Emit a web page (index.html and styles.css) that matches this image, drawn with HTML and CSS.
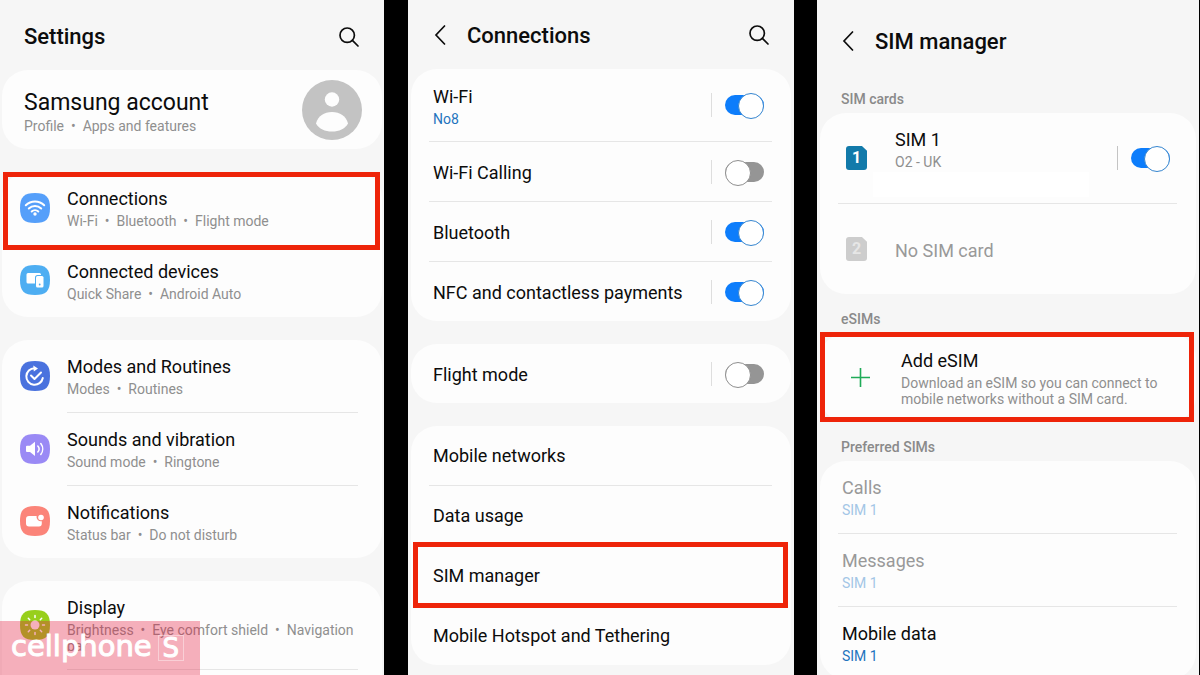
FILE: index.html
```html
<!DOCTYPE html>
<html lang="en">
<head>
<meta charset="utf-8">
<meta name="viewport" content="width=device-width, initial-scale=1">
<title>Add an eSIM: Settings, Connections, SIM manager</title>
<link rel="stylesheet" href="styles.css">
</head>
<body>
<main class="screens">
  <section class="screen screen-settings">
    <header class="bar">
      <h1>Settings</h1>
      <button class="icon-btn" aria-label="Search"><svg width="20" height="20" viewBox="0 0 20 20"><circle cx="8.2" cy="8.2" r="7.2"/><path d="M13.4 13.4 19 19"/></svg></button>
    </header>
    <a class="card account" href="#">
      <span class="text"><span class="name">Samsung account</span><span class="sub">Profile &nbsp;•&nbsp; Apps and features</span></span>
      <svg class="avatar" width="60" height="60" viewBox="0 0 60 60"><circle cx="30" cy="30" r="30" fill="#c3c3c3"/><circle cx="30" cy="19.500" r="7.200" fill="#fdfdfd"/><path d="M14 43.500C16 36 22 32 30 32s14 4 16 11.500C43 49 37 51.500 30 51.500S17 49 14 43.500Z" fill="#fdfdfd"/></svg>
    </a>
    <nav class="card">
      <a class="item marked" href="#">
        <svg class="badge" viewBox="0 0 30 30"><path class="tile blue" d="M15 0C26 0 30 4 30 15S26 30 15 30 0 26 0 15 4 0 15 0Z"/><g class="line"><path d="M5.800 12.300a13 13 0 0 1 18.400 0M8.800 15.500a8.800 8.800 0 0 1 12.400 0M11.700 18.500a4.700 4.700 0 0 1 6.600 0"/></g><circle cx="15" cy="21" r="1.700" fill="#fff"/></svg>
        <span class="text"><span class="title">Connections</span><span class="sub">Wi-Fi &nbsp;•&nbsp; Bluetooth &nbsp;•&nbsp; Flight mode</span></span>
      </a>
      <a class="item" href="#">
        <svg class="badge" viewBox="0 0 30 30"><path class="tile sky" d="M15 0C26 0 30 4 30 15S26 30 15 30 0 26 0 15 4 0 15 0Z"/><path fill="#fff" d="M8 8h11.500a1.500 1.500 0 0 1 1.500 1.500V10h-3.500a2.500 2.500 0 0 0-2.500 2.500V18.500H8A1.500 1.500 0 0 1 6.500 17V9.500A1.500 1.500 0 0 1 8 8Z"/><rect x="16" y="11" width="7.500" height="11.500" rx="1.500" fill="#fff"/><circle cx="19.700" cy="19.500" r=".9" fill="#4eaef2"/></svg>
        <span class="text"><span class="title">Connected devices</span><span class="sub">Quick Share &nbsp;•&nbsp; Android Auto</span></span>
      </a>
    </nav>
    <nav class="card">
      <a class="item" href="#">
        <svg class="badge" viewBox="0 0 30 30"><path class="tile navy" d="M15 0C26 0 30 4 30 15S26 30 15 30 0 26 0 15 4 0 15 0Z"/><g class="line"><path d="M14.500 7.200A8.300 8.300 0 1 0 22.800 17M11 14.500l3.500 3.500L21 11.500"/></g><path d="M13.300 4.400 18 7.400l-4.200 3.200Z" fill="#fff"/></svg>
        <span class="text"><span class="title">Modes and Routines</span><span class="sub">Modes &nbsp;•&nbsp; Routines</span></span>
      </a>
      <a class="item" href="#">
        <svg class="badge" viewBox="0 0 30 30"><path class="tile violet" d="M15 0C26 0 30 4 30 15S26 30 15 30 0 26 0 15 4 0 15 0Z"/><path d="M7 11.700h3l5-4V22l-5-4H7a1 1 0 0 1-1-1v-4.300a1 1 0 0 1 1-1Z" fill="#fff"/><g class="line thin"><path d="M17.800 12a4.500 4.500 0 0 1 0 6M20.800 9.500a9 9 0 0 1 0 11"/></g></svg>
        <span class="text"><span class="title">Sounds and vibration</span><span class="sub">Sound mode &nbsp;•&nbsp; Ringtone</span></span>
      </a>
      <a class="item" href="#">
        <svg class="badge" viewBox="0 0 30 30"><path class="tile coral" d="M15 0C26 0 30 4 30 15S26 30 15 30 0 26 0 15 4 0 15 0Z"/><path fill="#fff" d="M9 10h7.600a4.400 4.400 0 0 0 5.200 5.200V17.500A3 3 0 0 1 19 20.500H9A3 3 0 0 1 6 17.500V13A3 3 0 0 1 9 10Z"/><circle cx="21" cy="11.500" r="2.800" fill="#fff"/></svg>
        <span class="text"><span class="title">Notifications</span><span class="sub">Status bar &nbsp;•&nbsp; Do not disturb</span></span>
      </a>
    </nav>
    <nav class="card open">
      <a class="item" href="#">
        <svg class="badge" viewBox="0 0 30 30"><path class="tile green" d="M15 0C26 0 30 4 30 15S26 30 15 30 0 26 0 15 4 0 15 0Z"/><circle cx="15" cy="15" r="4.500" fill="#fff"/><g class="line thin"><path d="M15 5.500v2M15 22.500v2M5.500 15h2M22.500 15h2M8.300 8.300l1.400 1.400M20.300 20.300l1.400 1.400M8.300 21.700l1.400-1.400M20.300 9.700l1.400-1.400"/></g></svg>
        <span class="text"><span class="title">Display</span><span class="sub">Brightness &nbsp;•&nbsp; Eye comfort shield &nbsp;•&nbsp; Navigation bar</span></span>
      </a>
    </nav>
    <div class="watermark"><span>cellphone</span><b>S</b></div>
  </section>

  <section class="screen screen-connections">
    <header class="bar">
      <button class="icon-btn" aria-label="Back"><svg width="12" height="20" viewBox="0 0 12 20"><path d="M10.500 1 2 10l8.500 9"/></svg></button>
      <h2>Connections</h2>
      <button class="icon-btn" aria-label="Search"><svg width="20" height="20" viewBox="0 0 20 20"><circle cx="8.200" cy="8.200" r="7.200"/><path d="M13.400 13.400 19 19"/></svg></button>
    </header>
    <div class="card">
      <div class="row"><label class="text" for="wifi"><span class="title">Wi-Fi</span><span class="sub link">No8</span></label><span class="toggle"><input type="checkbox" id="wifi" checked></span></div>
      <div class="row"><label class="text" for="calling"><span class="title">Wi-Fi Calling</span></label><span class="toggle"><input type="checkbox" id="calling"></span></div>
      <div class="row"><label class="text" for="bluetooth"><span class="title">Bluetooth</span></label><span class="toggle"><input type="checkbox" id="bluetooth" checked></span></div>
      <div class="row"><label class="text" for="nfc"><span class="title">NFC and contactless payments</span></label><span class="toggle"><input type="checkbox" id="nfc" checked></span></div>
    </div>
    <div class="card">
      <div class="row"><label class="text" for="flight"><span class="title">Flight mode</span></label><span class="toggle"><input type="checkbox" id="flight"></span></div>
    </div>
    <nav class="card">
      <a class="row" href="#"><span class="text"><span class="title">Mobile networks</span></span></a>
      <a class="row" href="#"><span class="text"><span class="title">Data usage</span></span></a>
      <a class="row marked" href="#"><span class="text"><span class="title">SIM manager</span></span></a>
      <a class="row" href="#"><span class="text"><span class="title">Mobile Hotspot and Tethering</span></span></a>
    </nav>
  </section>

  <section class="screen screen-sim">
    <header class="bar">
      <button class="icon-btn" aria-label="Back"><svg width="12" height="20" viewBox="0 0 12 20"><path d="M10.500 1 2 10l8.500 9"/></svg></button>
      <h2>SIM manager</h2>
    </header>
    <h3>SIM cards</h3>
    <div class="card">
      <div class="row slot">
        <span class="sim">1</span>
        <label class="text" for="sim1"><span class="title">SIM 1</span><span class="sub">O2 - UK</span><span class="blank"></span></label>
        <span class="toggle dark"><input type="checkbox" id="sim1" checked></span>
      </div>
      <div class="row slot disabled">
        <span class="sim">2</span>
        <span class="text"><span class="title">No SIM card</span></span>
      </div>
    </div>
    <h3>eSIMs</h3>
    <a class="card add marked" href="#">
      <svg width="19" height="19" viewBox="0 0 19 19"><path d="M9.500 0v19M0 9.500h19" stroke="#1fab58" stroke-width="1.600"/></svg>
      <span class="text"><span class="title">Add eSIM</span><span class="sub">Download an eSIM so you can connect to mobile networks without a SIM card.</span></span>
    </a>
    <h3>Preferred SIMs</h3>
    <div class="card">
      <div class="row disabled"><span class="text"><span class="title">Calls</span><span class="sub link">SIM 1</span></span></div>
      <div class="row disabled"><span class="text"><span class="title">Messages</span><span class="sub link">SIM 1</span></span></div>
      <a class="row" href="#"><span class="text"><span class="title">Mobile data</span><span class="sub link">SIM 1</span></span></a>
    </div>
  </section>
</main>
</body>
</html>
```
FILE: styles.css
```css
* { box-sizing: border-box; }

body {
  margin: 0;
  background: #000;
  color: #0c0c0c;
  font-family: Roboto, "Liberation Sans", sans-serif;
}

a { color: inherit; text-decoration: none; }

.screens {
  display: flex;
  height: 100vh;
  overflow: hidden;
  padding-right: 1px;
}

.screen {
  position: relative;
  display: flex;
  flex-direction: column;
  min-width: 0;
  overflow: hidden;
  background: #f6f6f6;
}
.screen-settings { flex: 384 1 0; }
.screen-connections { flex: 386 1 0; margin: 0 23px 0 24px; }
.screen-sim { flex: 382 1 0; }

/* Header bars */
.bar {
  display: flex;
  flex-shrink: 0;
  align-items: center;
  height: 70px;
  padding: 3px 25px 0 24px;
}
.screen-connections .bar { height: 69px; padding: 1px 25px 0 26px; }
.screen-sim .bar { height: 74px; padding: 8px 25px 0 25px; }

h1, h2 {
  flex: 1;
  margin: 0;
  padding-top: 1px;
  font-size: 22px;
  line-height: 28px;
  font-weight: 500;
}
h2 { margin-left: 21px; }

.icon-btn {
  display: flex;
  padding: 0;
  border: 0;
  background: none;
}
.icon-btn svg {
  fill: none;
  stroke: #0c0c0c;
  stroke-width: 1.7;
  stroke-linecap: round;
}

h3 {
  flex-shrink: 0;
  margin: 0;
  padding: 17px 24px 6px;
  color: #8a8a8a;
  font-size: 14px;
  line-height: 16px;
  font-weight: 500;
}

/* Cards */
.card {
  flex-shrink: 0;
  margin: 0 2px 23px;
  border-radius: 26px;
  background: #fdfdfd;
}
.screen-connections .card { margin: 0 3px 23px; }
.screen-sim .card { margin: 0 3px; }
.card.open {
  flex: 1 0 auto;
  margin-bottom: 0;
  border-radius: 26px 26px 0 0;
}

.text { display: flex; flex: 1; flex-direction: column; gap: 2px; }
.title { font-size: 18px; line-height: 24px; }
.sub { color: #8f8f8f; font-size: 14px; line-height: 16px; }
.sub.link { color: #1f74bd; }

.account {
  display: flex;
  align-items: center;
  min-height: 79px;
  padding: 0 20px 0 22px;
}
.account .text { gap: 0; padding-top: 3px; }
.name { font-size: 23px; line-height: 30px; }

.item {
  position: relative;
  display: flex;
  align-items: center;
  gap: 17px;
  padding: 0 24px 0 18px;
}
.item .text { padding: 15px 0; border-bottom: 1px solid #e6e6e6; }
.item:last-child .text { border-bottom: 0; }
.item.marked .text { border-bottom-color: transparent; }
.open .item:last-child .text { border-bottom: 1px solid #e6e6e6; }

.badge { width: 30px; height: 30px; flex-shrink: 0; margin-bottom: 2px; }
.line { fill: none; stroke: #fff; stroke-width: 2; stroke-linecap: round; stroke-linejoin: round; }
.line.thin { stroke-width: 1.5; }
.blue { fill: #559ffa; }
.sky { fill: #4eaef2; }
.navy { fill: #4a72de; }
.violet { fill: #9a8af5; }
.coral { fill: #fb8479; }
.green { fill: #98cf1c; }

.row {
  position: relative;
  display: flex;
  align-items: center;
  margin: 0 19px 0 18px;
  padding: 14px 8px 14px 4px;
  border-bottom: 1px solid #e6e6e6;
}
.row:last-child { border-bottom: 0; }
.row .text { padding-top: 2px; }
.screen-connections .row { min-height: 60px; }
.screen-connections .row:last-child { min-height: 59px; }
.screen-connections nav .text { padding-top: 0; }
.screen-sim .row .text { padding: 1px 0; }

/* Red frame drawn over a row to point it out */
.marked { position: relative; }
.marked::after {
  content: "";
  position: absolute;
  inset: 0 2px -5px 1px;
  border: 5px solid #ee2409;
  pointer-events: none;
}
.row.marked::after { inset: -4px -16px -3px; }
.add.marked::after { inset: -1px 2px 0 0; }

/* Switches */
.toggle {
  display: flex;
  align-items: center;
  height: 24px;
  padding-left: 13px;
  border-left: 1px solid #dedede;
}
.toggle.dark { border-left-color: #c4c4c4; }
.toggle input {
  position: relative;
  width: 39px;
  height: 24px;
  margin: 0;
  appearance: none;
}
.toggle input::before {
  content: "";
  position: absolute;
  inset: 2px 0;
  border-radius: 10px;
  background: #959595;
}
.toggle input::after {
  content: "";
  position: absolute;
  top: 0;
  left: 0;
  width: 24px;
  height: 24px;
  border: 1px solid #8f8f8f;
  border-radius: 50%;
  background: #fff;
}
.toggle input:checked::before { background: #0d7dfb; }
.toggle input:checked::after { right: 0; left: auto; border-color: #3585cf; }

/* SIM manager */
.slot { gap: 28px; min-height: 91px; padding: 0 7px 0 8px; }
.slot:last-child { min-height: 90px; }
.row.slot .text { padding: 15px 0 6px; }
.row.slot.disabled .text { padding: 4px 0 0; }
.blank { height: 25px; margin: 0 0 0 -22px; background: #fff; }
.sim {
  width: 21px;
  height: 24px;
  border-radius: 3px;
  background: #127aaa;
  clip-path: polygon(0 0, 76% 0, 100% 20%, 100% 100%, 0 100%);
  color: #fff;
  font-size: 16px;
  line-height: 24px;
  font-weight: 700;
  text-align: center;
}
.disabled { color: #999; }
.disabled .sub.link { color: #a3c6e6; }
.disabled .sim { background: #cdcdcd; color: #e6e6e6; }

.add {
  display: flex;
  align-items: center;
  gap: 31px;
  min-height: 89px;
  padding: 0 30px 0 31px;
}
.add svg { flex-shrink: 0; }

.watermark {
  position: absolute;
  left: 0;
  bottom: 0;
  display: flex;
  align-items: center;
  gap: 6px;
  width: 200px;
  height: 54px;
  padding-left: 11px;
  background: rgba(230, 28, 64, .35);
  color: #fff;
  font: 400 29px/32px "DejaVu Sans", sans-serif;
  -webkit-text-stroke: 1px #fff;
}
.watermark span { padding-bottom: 4px; }
.watermark b {
  width: 26px;
  border: 1px solid rgba(255, 255, 255, .4);
  font-size: 26px;
  font-weight: 400;
  line-height: 24px;
  text-align: center;
}
```
